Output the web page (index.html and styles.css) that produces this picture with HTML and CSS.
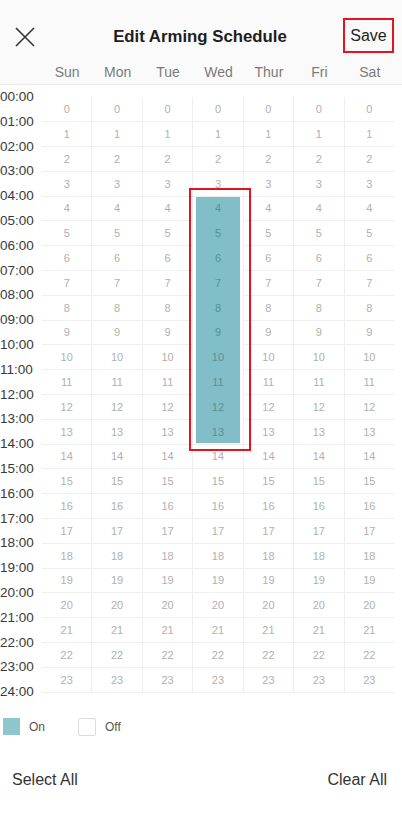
FILE: index.html
```html
<!DOCTYPE html>
<html lang="en">
<head>
<meta charset="utf-8">
<title>Edit Arming Schedule</title>
<link rel="stylesheet" href="styles.css">
</head>
<body>
<div class="top">
  <header class="nav">
    <button class="close" aria-label="Close">
      <svg width="20" height="20" viewBox="0 0 20 20"><path d="M1 1L19 19M19 1L1 19" stroke="#333" stroke-width="1.6" fill="none"/></svg>
    </button>
    <h1 class="title">Edit Arming Schedule</h1>
    <button class="save">Save</button>
  </header>
  <div class="days">
    <span>Sun</span><span>Mon</span><span>Tue</span><span>Wed</span><span>Thur</span><span>Fri</span><span>Sat</span>
  </div>
</div>
<main class="schedule">
  <div class="times">
    <div>00:00</div><div>01:00</div><div>02:00</div><div>03:00</div><div>04:00</div><div>05:00</div><div>06:00</div><div>07:00</div><div>08:00</div><div>09:00</div><div>10:00</div><div>11:00</div><div>12:00</div><div>13:00</div><div>14:00</div><div>15:00</div><div>16:00</div><div>17:00</div><div>18:00</div><div>19:00</div><div>20:00</div><div>21:00</div><div>22:00</div><div>23:00</div><div>24:00</div>
  </div>
  <div class="grid-wrap">
    <div class="grid">
      <div class="c">0</div><div class="c">0</div><div class="c">0</div><div class="c">0</div><div class="c">0</div><div class="c">0</div><div class="c">0</div>
      <div class="c">1</div><div class="c">1</div><div class="c">1</div><div class="c">1</div><div class="c">1</div><div class="c">1</div><div class="c">1</div>
      <div class="c">2</div><div class="c">2</div><div class="c">2</div><div class="c">2</div><div class="c">2</div><div class="c">2</div><div class="c">2</div>
      <div class="c">3</div><div class="c">3</div><div class="c">3</div><div class="c">3</div><div class="c">3</div><div class="c">3</div><div class="c">3</div>
      <div class="c">4</div><div class="c">4</div><div class="c">4</div><div class="c on">4</div><div class="c">4</div><div class="c">4</div><div class="c">4</div>
      <div class="c">5</div><div class="c">5</div><div class="c">5</div><div class="c on">5</div><div class="c">5</div><div class="c">5</div><div class="c">5</div>
      <div class="c">6</div><div class="c">6</div><div class="c">6</div><div class="c on">6</div><div class="c">6</div><div class="c">6</div><div class="c">6</div>
      <div class="c">7</div><div class="c">7</div><div class="c">7</div><div class="c on">7</div><div class="c">7</div><div class="c">7</div><div class="c">7</div>
      <div class="c">8</div><div class="c">8</div><div class="c">8</div><div class="c on">8</div><div class="c">8</div><div class="c">8</div><div class="c">8</div>
      <div class="c">9</div><div class="c">9</div><div class="c">9</div><div class="c on">9</div><div class="c">9</div><div class="c">9</div><div class="c">9</div>
      <div class="c">10</div><div class="c">10</div><div class="c">10</div><div class="c on">10</div><div class="c">10</div><div class="c">10</div><div class="c">10</div>
      <div class="c">11</div><div class="c">11</div><div class="c">11</div><div class="c on">11</div><div class="c">11</div><div class="c">11</div><div class="c">11</div>
      <div class="c">12</div><div class="c">12</div><div class="c">12</div><div class="c on">12</div><div class="c">12</div><div class="c">12</div><div class="c">12</div>
      <div class="c">13</div><div class="c">13</div><div class="c">13</div><div class="c on last">13</div><div class="c">13</div><div class="c">13</div><div class="c">13</div>
      <div class="c">14</div><div class="c">14</div><div class="c">14</div><div class="c">14</div><div class="c">14</div><div class="c">14</div><div class="c">14</div>
      <div class="c">15</div><div class="c">15</div><div class="c">15</div><div class="c">15</div><div class="c">15</div><div class="c">15</div><div class="c">15</div>
      <div class="c">16</div><div class="c">16</div><div class="c">16</div><div class="c">16</div><div class="c">16</div><div class="c">16</div><div class="c">16</div>
      <div class="c">17</div><div class="c">17</div><div class="c">17</div><div class="c">17</div><div class="c">17</div><div class="c">17</div><div class="c">17</div>
      <div class="c">18</div><div class="c">18</div><div class="c">18</div><div class="c">18</div><div class="c">18</div><div class="c">18</div><div class="c">18</div>
      <div class="c">19</div><div class="c">19</div><div class="c">19</div><div class="c">19</div><div class="c">19</div><div class="c">19</div><div class="c">19</div>
      <div class="c">20</div><div class="c">20</div><div class="c">20</div><div class="c">20</div><div class="c">20</div><div class="c">20</div><div class="c">20</div>
      <div class="c">21</div><div class="c">21</div><div class="c">21</div><div class="c">21</div><div class="c">21</div><div class="c">21</div><div class="c">21</div>
      <div class="c">22</div><div class="c">22</div><div class="c">22</div><div class="c">22</div><div class="c">22</div><div class="c">22</div><div class="c">22</div>
      <div class="c">23</div><div class="c">23</div><div class="c">23</div><div class="c">23</div><div class="c">23</div><div class="c">23</div><div class="c">23</div>
    </div>
    <div class="mark"></div>
  </div>
</main>
<div class="legend">
  <span class="sw sw-on"></span><span class="lg-text">On</span>
  <span class="sw sw-off"></span><span class="lg-text">Off</span>
</div>
<div class="actions">
  <button class="act">Select All</button>
  <button class="act">Clear All</button>
</div>
</body>
</html>
```

FILE: styles.css
```css
* { box-sizing: border-box; }
html, body {
  margin: 0;
  padding: 0;
  background: #ffffff;
  font-family: "Liberation Sans", Arial, sans-serif;
  color: #333;
}
body { width: 402px; height: 830px; overflow: hidden; }

button {
  font-family: inherit;
  background: none;
  border: none;
  padding: 0;
  cursor: pointer;
}

.top {
  background: #fafafa;
  border-bottom: 1px solid #ececec;
}

.nav {
  display: flex;
  align-items: center;
  justify-content: space-between;
  height: 56px;
  padding: 18px 8px 0 15px;
}
.close {
  width: 20px;
  height: 20px;
  display: flex;
}
.title {
  margin: 0;
  font-size: 16.8px;
  font-weight: bold;
  color: #1e1e1e;
  padding-left: 22px;
}
.save {
  width: 51px;
  height: 35px;
  border: 2px solid #e4131d;
  font-size: 16px;
  color: #222;
  display: flex;
  align-items: center;
  justify-content: center;
  margin-top: -3px;
}

.days {
  display: grid;
  grid-template-columns: repeat(7, 1fr);
  height: 28px;
  margin-left: 42px;
  width: 353px;
  padding-top: 3px;
  align-items: center;
  font-size: 14px;
  color: #7a7a7a;
  text-align: center;
}

.schedule {
  display: flex;
}
.times {
  width: 42px;
  font-size: 13.5px;
  color: #3a3a3a;
}
.times div {
  height: 24.8px;
  line-height: 24.8px;
}
.grid-wrap {
  position: relative;
  margin-top: 12.4px;
  width: 353px;
}
.grid {
  display: grid;
  grid-template-columns: repeat(7, 1fr);
  grid-auto-rows: 24.8px;
}
.c {
  border-bottom: 1px solid #efefef;
  border-right: 1px solid #efefef;
  display: flex;
  align-items: center;
  justify-content: center;
  font-size: 11px;
  color: #b0b0b0;
}
.c:nth-child(7n) { border-right-color: transparent; }
.c.on {
  background-image: linear-gradient(#82bec7, #82bec7);
  background-repeat: no-repeat;
  background-origin: border-box;
  background-clip: border-box;
  background-size: 44px calc(100% + 1px);
  background-position: 3px 0;
  border-bottom-color: transparent;
  color: #5a8f98;
}
.c.on.last {
  background-size: 44px calc(100% - 2px);
  border-bottom-color: #efefef;
}
.mark {
  position: absolute;
  left: 147px;
  top: 90.5px;
  width: 62px;
  height: 263px;
  border: 2px solid #e4131d;
}

.legend {
  display: flex;
  align-items: center;
  margin-top: 13px;
  padding-left: 3px;
  height: 18px;
  font-size: 12px;
  color: #555;
}
.sw {
  width: 17px;
  height: 17px;
  display: inline-block;
}
.sw-on { background: #8fc5cd; }
.sw-off {
  width: 18px;
  height: 18px;
  border: 1px solid #dcdcdc;
  border-radius: 2px;
}
.lg-text { margin-left: 9px; width: 49px; }

.actions {
  display: flex;
  justify-content: space-between;
  margin-top: 35px;
  padding: 0 15px 0 12px;
}
.act {
  font-size: 16px;
  color: #333;
}
```
